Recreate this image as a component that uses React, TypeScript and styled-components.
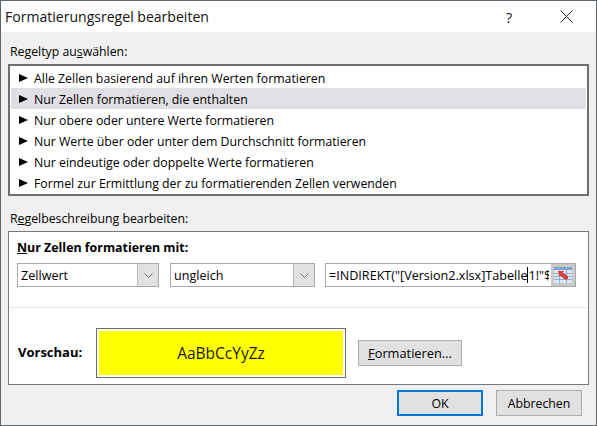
import React from "react";
import styled, { createGlobalStyle } from "styled-components";

const Global = createGlobalStyle`
  html, body { margin: 0; padding: 0; background: #fff; }
  * { box-sizing: border-box; }
`;

const font = `"Open Sans", "Noto Sans", "Liberation Sans", sans-serif`;

const Dialog = styled.div`
  width: 597px;
  height: 426px;
  display: flex;
  flex-direction: column;
  background: #f0f0f0;
  border: 1px solid #5b6770;
  font-family: ${font};
  font-size: 12.3px;
  color: #000;
  overflow: hidden;
`;
const TitleBar = styled.div`
  height: 31px;
  flex: none;
  background: #fff;
  display: flex;
  align-items: center;
  padding: 0 7px 0 4px;
`;
const Title = styled.div`
  flex: 1;
  font-size: 14.05px;
  color: #111;
`;
const HelpGlyph = styled.div`
  width: 46px;
  font-size: 15px;
  text-align: center;
  margin-right: 11px;
  color: #222;
`;
const CloseBtn = styled.div`
  width: 46px;
  height: 31px;
  display: flex;
  align-items: center;
  justify-content: center;
`;
const Body = styled.div`
  flex: 1;
  display: flex;
  flex-direction: column;
  padding: 0 7px;
`;
const SectionLabel = styled.div<{ $top: number }>`
  margin-top: ${(p) => p.$top}px;
  height: 16px;
  line-height: 16px;
  padding-left: 2px;
  white-space: nowrap;
`;
const ListBox = styled.div`
  margin-top: 4px;
  height: 132px;
  background: #fff;
  border: 2px solid #6f6f6f;
  padding: 1px 1px 0 1px;
`;
const Row = styled.div<{ $active?: boolean }>`
  height: 21px;
  display: flex;
  align-items: center;
  padding: 1px 0 0 8px;
  background: ${(p) => (p.$active ? "#e0dfe3" : "#fff")};
  white-space: nowrap;
`;
const Arrow = styled.span`
  width: 0;
  height: 0;
  border-style: solid;
  border-width: 4.5px 0 4.5px 9px;
  border-color: transparent transparent transparent #000;
  margin-right: 6px;
  flex: none;
`;
const Group = styled.div`
  margin-top: 4px;
  height: 154px;
  background: #fff;
  border: 1px solid #7a7a7a;
  display: flex;
  flex-direction: column;
`;
const GroupTop = styled.div`
  height: 76px;
  flex: none;
  padding: 8px 0 0 7px;
  border-bottom: 1px solid #e3e3e3;
  margin: 0 1px;
`;
const Heading = styled.div`
  font-weight: 700;
  font-size: 12.4px;
  line-height: 16px;
  height: 16px;
`;
const Controls = styled.div`
  display: flex;
  margin-top: 7px;
`;
const Combo = styled.div<{ $w: number; $gap: number }>`
  width: ${(p) => p.$w}px;
  margin-right: ${(p) => p.$gap}px;
  height: 24px;
  border: 1px solid #a9a9a9;
  display: flex;
  align-items: center;
  padding-left: 3px;
`;
const ComboText = styled.span`
  flex: 1;
  font-size: 12.6px;
`;
const ComboButton = styled.span`
  width: 21px;
  height: 22px;
  background: #e1e1e1;
  border-left: 1px solid #b9b9b9;
  display: flex;
  align-items: center;
  justify-content: center;
`;
const Formula = styled.div`
  width: 251px;
  height: 24px;
  border: 1px solid #a9a9a9;
  display: flex;
  align-items: center;
  overflow: hidden;
  font-size: 12.6px;
`;
const FormulaText = styled.div`
  flex: 1;
  min-width: 0;
  overflow: hidden;
  white-space: nowrap;
  padding-left: 3px;
  margin-right: 2px;
  display: flex;
`;
const Caret = styled.span`
  display: inline-block;
  width: 1px;
  height: 16px;
  background: #000;
  flex: none;
`;
const RefButton = styled.span`
  width: 24px;
  height: 22px;
  flex: none;
  background: #c9c9c9;
  display: flex;
  align-items: center;
  justify-content: center;
`;
const PreviewRow = styled.div`
  flex: 1;
  display: flex;
  align-items: flex-start;
  padding: 20px 0 0 9px;
`;
const PreviewLabel = styled.div`
  width: 78px;
  margin-top: 15px;
  font-weight: 700;
  font-size: 13px;
  line-height: 18px;
`;
const PreviewFrame = styled.div`
  width: 250px;
  height: 50px;
  border: 1px solid #6d6d6d;
  padding: 2px;
`;
const PreviewFill = styled.div`
  height: 100%;
  background: #ff0;
  display: flex;
  align-items: center;
  justify-content: center;
  font-size: 15.5px;
  color: #1a1a1a;
`;
const Btn = styled.div<{ $w: number; $primary?: boolean }>`
  width: ${(p) => p.$w}px;
  height: 26px;
  background: #e1e1e1;
  border: ${(p) => (p.$primary ? "2px solid #0078d7" : "1px solid #adadad")};
  display: flex;
  align-items: center;
  justify-content: center;
  font-size: 12.3px;
`;
const FormatBtn = styled(Btn)`
  margin: 12px 0 0 12px;
  font-size: 12.8px;
`;
const Footer = styled.div`
  display: flex;
  justify-content: flex-end;
  gap: 13px;
  margin-top: 5px;
  padding-right: 7px;
`;
const U = styled.span`
  text-decoration: underline;
  text-underline-offset: 1px;
`;

const Chevron = () => (
  <svg width="9" height="5" viewBox="0 0 9 5" fill="none" stroke="#707070" strokeWidth="1">
    <path d="M0.5 0.5 L4.5 4.5 L8.5 0.5" />
  </svg>
);

const rows = [
  "Alle Zellen basierend auf ihren Werten formatieren",
  "Nur Zellen formatieren, die enthalten",
  "Nur obere oder untere Werte formatieren",
  "Nur Werte über oder unter dem Durchschnitt formatieren",
  "Nur eindeutige oder doppelte Werte formatieren",
  "Formel zur Ermittlung der zu formatierenden Zellen verwenden",
];

export default function App() {
  return (
    <>
      <Global />
      <Dialog>
        <TitleBar>
          <Title>Formatierungsregel bearbeiten</Title>
          <HelpGlyph>?</HelpGlyph>
          <CloseBtn>
            <svg width="13" height="13" viewBox="0 0 13 13" stroke="#222" strokeWidth="1" fill="none">
              <path d="M0.5 0.5 L12.5 12.5 M12.5 0.5 L0.5 12.5" />
            </svg>
          </CloseBtn>
        </TitleBar>
        <Body>
          <SectionLabel $top={12}>
            Regeltyp au<U>s</U>wählen:
          </SectionLabel>
          <ListBox>
            {rows.map((r, i) => (
              <Row key={r} $active={i === 1}>
                <Arrow />
                {r}
              </Row>
            ))}
          </ListBox>
          <SectionLabel $top={15}>
            R<U>e</U>gelbeschreibung bearbeiten:
          </SectionLabel>
          <Group>
            <GroupTop>
              <Heading>
                <U>N</U>ur Zellen formatieren mit:
              </Heading>
              <Controls>
                <Combo $w={142} $gap={11}>
                  <ComboText>Zellwert</ComboText>
                  <ComboButton>
                    <Chevron />
                  </ComboButton>
                </Combo>
                <Combo $w={145} $gap={10}>
                  <ComboText>ungleich</ComboText>
                  <ComboButton>
                    <Chevron />
                  </ComboButton>
                </Combo>
                <Formula>
                  <FormulaText>
                    =INDIREKT("[Version2.xlsx]Tabelle
                    <Caret />
                    1!"$
                  </FormulaText>
                  <RefButton>
                    <svg width="18" height="16" viewBox="0 0 18 16">
                      <rect x="0" y="0" width="18" height="16" fill="#dce8f6" />
                      <rect x="0" y="0" width="18" height="3" fill="#7fa3d1" />
                      <path d="M0 6.5H18M0 9.5H18M0 12.5H18M5.5 0V16M12.5 0V16" stroke="#8fb0d8" strokeWidth="1" />
                      <path d="M4 4 L10 4 L9 6 L14 9 L14 12 L11 13 L7 9 L5 9 Z" fill="#d9433a" />
                    </svg>
                  </RefButton>
                </Formula>
              </Controls>
            </GroupTop>
            <PreviewRow>
              <PreviewLabel>Vorschau:</PreviewLabel>
              <PreviewFrame>
                <PreviewFill>AaBbCcYyZz</PreviewFill>
              </PreviewFrame>
              <FormatBtn $w={104}>
                <span>
                  <U>F</U>ormatieren...
                </span>
              </FormatBtn>
            </PreviewRow>
          </Group>
          <Footer>
            <Btn $w={86} $primary>OK</Btn>
            <Btn $w={86}>Abbrechen</Btn>
          </Footer>
        </Body>
      </Dialog>
    </>
  );
}
